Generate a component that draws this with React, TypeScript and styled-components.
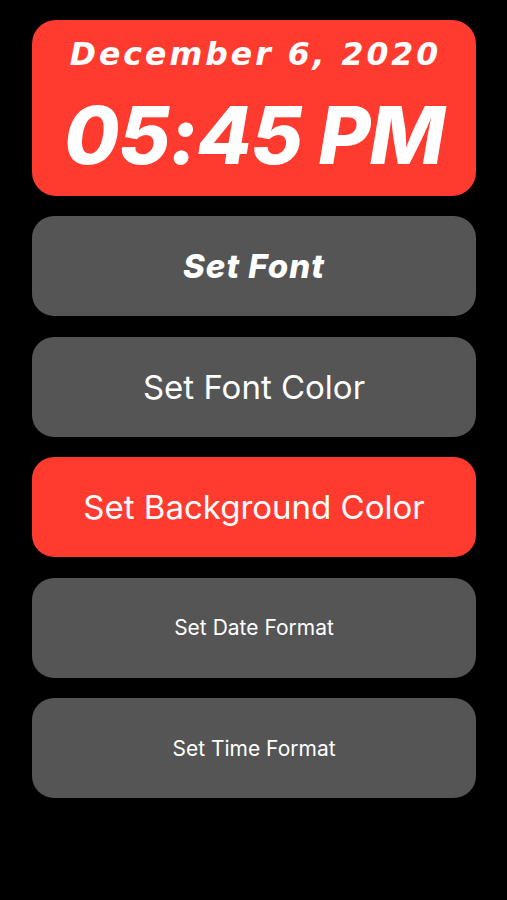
import React from "react";
import styled, { createGlobalStyle } from "styled-components";

const Global = createGlobalStyle`
  html, body { margin: 0; padding: 0; background: #000; }
  body { font-family: "Inter", "Liberation Sans", sans-serif; }
`;

const Page = styled.div`
  background: #000;
  min-height: 900px;
  padding: 20px 31px 0 32px;
  box-sizing: border-box;
  display: flex;
  flex-direction: column;
  gap: 20.5px;
`;

const ClockCard = styled.div`
  height: 175.5px;
  background: #ff3b30;
  border-radius: 24px;
  display: flex;
  flex-direction: column;
  align-items: center;
  color: #fff;
  font-style: italic;
`;

const DateText = styled.div`
  font-family: "DejaVu Sans", sans-serif;
  font-weight: 700;
  font-size: 31.5px;
  letter-spacing: 3px;
  line-height: 31px;
  margin-top: 19px;
  margin-left: 3px;
`;

const TimeText = styled.div`
  font-family: "Inter", sans-serif;
  font-weight: 800;
  font-size: 80px;
  letter-spacing: -1px;
  line-height: 80px;
  margin-top: 25px;
`;

const ActionButton = styled.button<{ $red?: boolean; $size: number; $fancy?: boolean }>`
  height: 100px;
  border: none;
  border-radius: 22px;
  background: ${(p) => (p.$red ? "#ff3b30" : "#555555")};
  color: #fff;
  font-family: "Inter", sans-serif;
  font-style: ${(p) => (p.$fancy ? "italic" : "normal")};
  font-weight: ${(p) => (p.$fancy ? 800 : 400)};
  letter-spacing: ${(p) => (p.$fancy ? "1px" : "0")};
  font-size: ${(p) => p.$size}px;
  display: flex;
  align-items: center;
  justify-content: center;
  padding: 0;
`;

export default function App() {
  return (
    <>
      <Global />
      <Page>
        <ClockCard>
          <DateText>December 6, 2020</DateText>
          <TimeText>05:45 PM</TimeText>
        </ClockCard>
        <ActionButton $size={33} $fancy>Set Font</ActionButton>
        <ActionButton $size={33}>Set Font Color</ActionButton>
        <ActionButton $size={33} $red>Set Background Color</ActionButton>
        <ActionButton $size={21}>Set Date Format</ActionButton>
        <ActionButton $size={21}>Set Time Format</ActionButton>
      </Page>
    </>
  );
}
